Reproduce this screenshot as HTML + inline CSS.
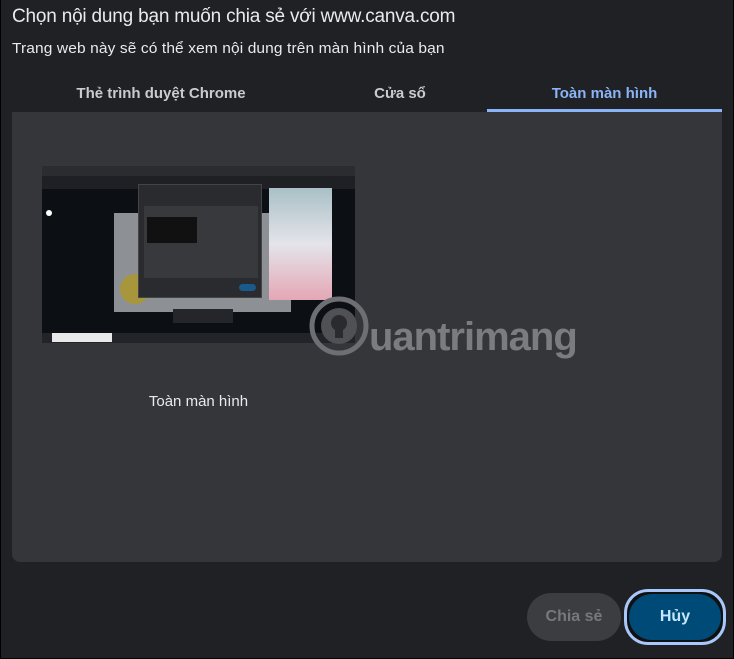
<!DOCTYPE html>
<html><head><meta charset="utf-8"><style>
*{margin:0;padding:0;box-sizing:border-box}
body{width:734px;height:659px;background:#000;overflow:hidden;font-family:"Liberation Sans","DejaVu Sans",sans-serif;position:relative}
.dlg{position:absolute;left:1px;top:0;width:732px;height:658px;background:#202124}
.abs{position:absolute}
.t1{left:11px;top:6px;font-size:19px;color:#e8eaed;letter-spacing:-0.2px}
.t2{left:11px;top:41px;font-size:14.5px;color:#e8eaed;letter-spacing:0.1px;transform:scaleX(1.07);transform-origin:left}
.tab{top:85px;font-size:15px;font-weight:bold;color:#c9cbce;text-align:center}
.panel{left:11px;top:112px;width:710px;height:450px;background:#35363a;border-radius:0 0 8px 8px}
.btn{border-radius:24px;font-size:16px;font-weight:bold;text-align:center;line-height:48px}
</style></head><body>
<div class="dlg">
<div class="abs t1">Chọn nội dung bạn muốn chia sẻ với www.canva.com</div>
<div class="abs t2">Trang web này sẽ có thể xem nội dung trên màn hình của bạn</div>
<div class="abs tab" style="left:11px;width:298px">Thẻ trình duyệt Chrome</div>
<div class="abs tab" style="left:320px;width:158px">Cửa sổ</div>
<div class="abs tab" style="left:486px;width:235px;color:#8ab4f8">Toàn màn hình</div>
<div class="abs" style="left:486px;top:109px;width:235px;height:3px;background:#8ab4f8"></div>
<div class="abs panel"></div>
<!-- thumbnail -->
<div class="abs" style="left:41px;top:166px;width:313px;height:177px;background:#0c1014">
 <div class="abs" style="left:0;top:0;width:313px;height:10px;background:#2a2c30"></div>
 <div class="abs" style="left:0;top:10px;width:313px;height:13px;background:#1e2024"></div>
 <div class="abs" style="left:72px;top:47px;width:177px;height:99px;background:#8d9196"></div>
 <div class="abs" style="left:78px;top:108px;width:30px;height:30px;border-radius:50%;background:#a8963c"></div>
 <div class="abs" style="left:96px;top:18px;width:124px;height:114px;background:#2a2b2e;border:1px solid #444"></div>
 <div class="abs" style="left:102px;top:40px;width:114px;height:72px;background:#38393c"></div>
 <div class="abs" style="left:105px;top:51px;width:50px;height:26px;background:#111"></div>
 <div class="abs" style="left:197px;top:118px;width:17px;height:7px;border-radius:4px;background:#1a5a8a"></div>
 <div class="abs" style="left:227px;top:22px;width:63px;height:112px;background:linear-gradient(#a9c0c6,#e4e4ea 50%,#e4a7b5)"></div>
 <div class="abs" style="left:131px;top:143px;width:60px;height:14px;background:#24262a"></div>
 <div class="abs" style="left:0;top:167px;width:313px;height:10px;background:#22242a"></div>
 <div class="abs" style="left:10px;top:167px;width:60px;height:9px;background:#e8e8e8"></div>
 <div class="abs" style="left:4px;top:44px;width:6px;height:6px;border-radius:50%;background:#fff"></div>
</div>
<!-- watermark -->
<svg class="abs" style="left:308px;top:293px" width="270" height="70">
 <circle cx="30" cy="33" r="27" fill="none" stroke="#6e6f72" stroke-width="5"/>
 <circle cx="30" cy="33" r="18" fill="#505155"/>
 <circle cx="30" cy="30" r="8" fill="#2a2b2e"/>
 <rect x="26" y="37" width="8" height="8" fill="#2a2b2e"/>
 <text x="60" y="57" font-family="Liberation Sans,sans-serif" font-size="40" font-weight="bold" fill="#7b7c7f" letter-spacing="-1">uantrimang</text>
</svg>
<div class="abs" style="left:11px;top:393px;width:373px;text-align:center;font-size:15px;color:#e8eaed">Toàn màn hình</div>
<div class="abs btn" style="left:526px;top:593px;width:94px;height:48px;background:#3c3d40;color:#77787b">Chia sẻ</div>
<div class="abs btn" style="left:623px;top:589px;width:102px;height:56px;border:3px solid #a8c7fa;background:#111;padding:2px">
 <div style="background:#004a77;border-radius:24px;height:46px;line-height:46px;color:#c2e7ff">Hủy</div>
</div>
</div>
</body></html>
